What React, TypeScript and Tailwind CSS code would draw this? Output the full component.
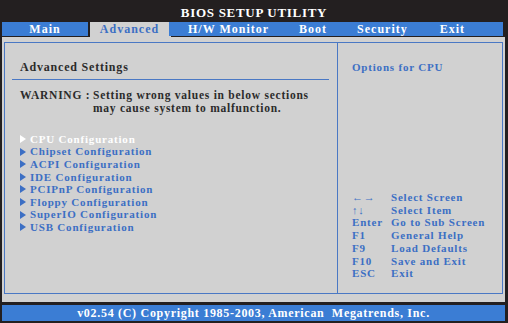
import React from "react";

const menuItems = [
  "CPU Configuration",
  "Chipset Configuration",
  "ACPI Configuration",
  "IDE Configuration",
  "PCIPnP Configuration",
  "Floppy Configuration",
  "SuperIO Configuration",
  "USB Configuration",
];

const keyHelp: [string, string][] = [
  ["\u2190\u2192", "Select Screen"],
  ["\u2191\u2193", "Select Item"],
  ["Enter", "Go to Sub Screen"],
  ["F1", "General Help"],
  ["F9", "Load Defaults"],
  ["F10", "Save and Exit"],
  ["ESC", "Exit"],
];

const Arrow = ({ white }: { white?: boolean }) => (
  <svg width="6" height="8" viewBox="0 0 6 8" className="shrink-0 mr-[4px]">
    <path d="M0 0 L6 4 L0 8 Z" fill={white ? "#ffffff" : "#3c6fc4"} />
  </svg>
);

export default function App() {
  return (
    <div className="w-[508px] h-[323px] bg-[#231f20] flex flex-col font-['Liberation_Serif',serif] font-bold overflow-hidden">
      {/* title */}
      <div className="h-[22px] flex items-end justify-center pb-[2px] text-white text-[13px] leading-[14px] tracking-[0.7px]">
        BIOS SETUP UTILITY
      </div>

      {/* tabs */}
      <div className="h-[14px] ml-[2px] mr-[5px] flex text-[12px] leading-[14px] tracking-[1px] text-white">
        <div className="w-[86px] bg-[#3b7dd4] flex justify-center">Main</div>
        <div className="w-[2px]" />
        <div className="w-[79px] bg-[#d1d1d1] text-[#3c6fc4] flex justify-center">Advanced</div>
        <div className="flex-1 bg-[#3b7dd4] flex">
          <span className="ml-[19px]">H/W Monitor</span>
          <span className="ml-[30px]">Boot</span>
          <span className="ml-[30px]">Security</span>
          <span className="ml-[32px]">Exit</span>
        </div>
      </div>
      <div className="h-px ml-[2px] mr-[3px] flex">
        <div className="w-[88px]" />
        <div className="w-[81px] bg-[#d1d1d1]" />
      </div>

      {/* body */}
      <div className="h-[265px] ml-[2px] mr-[3px] bg-[#d1d1d1] pt-[5px] px-[2px] pb-[8px]">
        <div className="h-full border border-[#4a78c4] flex">
          {/* left column */}
          <div className="w-[333px] border-r border-[#4a78c4] pt-[17px]">
            <div className="pl-[15px] text-[12px] leading-[14px] tracking-[0.8px] text-[#2b2b2b]">
              Advanced Settings
            </div>
            <div className="mt-[5px] ml-[7px] mr-[8px] h-px bg-[#4a78c4]" />
            <div className="mt-[9px] pl-[15px] flex text-[11.5px] leading-[13.4px] tracking-[0.75px] text-[#2b2b2b]">
              <span className="w-[73px] shrink-0">WARNING :</span>
              <span>
                Setting wrong values in below sections
                <br />
                may cause system to malfunction.
              </span>
            </div>
            <div className="mt-[17px] pl-[15px] flex flex-col text-[11px] leading-[12.6px] tracking-[0.8px]">
              {menuItems.map((item, i) => (
                <div
                  key={item}
                  className={`flex items-center ${i === 0 ? "text-white" : "text-[#3c6fc4]"}`}
                >
                  <Arrow white={i === 0} />
                  {item}
                </div>
              ))}
            </div>
          </div>

          {/* right column */}
          <div className="flex-1 flex flex-col pl-[14px] pt-[17px] text-[#3c6fc4] text-[11px] tracking-[0.8px]">
            <div className="leading-[14px]">Options for CPU</div>
            <div className="mt-[117px] grid grid-cols-[39px_1fr] leading-[12.7px]">
              {keyHelp.map(([k, d]) => (
                <React.Fragment key={k}>
                  <span>{k}</span>
                  <span>{d}</span>
                </React.Fragment>
              ))}
            </div>
          </div>
        </div>
      </div>

      <div className="h-[3px]" />

      {/* footer */}
      <div className="h-[16px] ml-[2px] mr-[3px] bg-[#3b7dd4] flex items-center justify-center text-white text-[12px] leading-[14px] tracking-[0.7px] whitespace-pre">
        v02.54 (C) Copyright 1985-2003, American  Megatrends, Inc.
      </div>
    </div>
  );
}
